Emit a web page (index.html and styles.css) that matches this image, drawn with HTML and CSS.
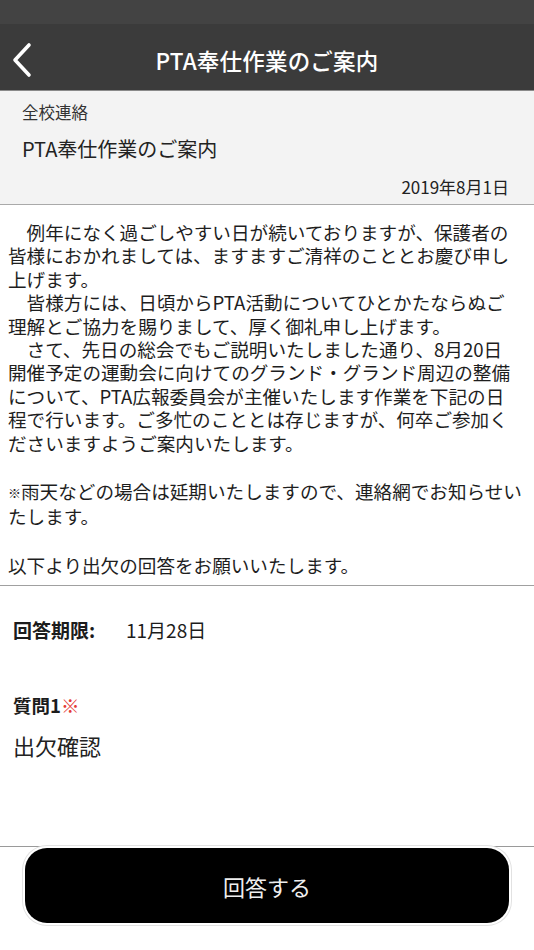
FILE: index.html
```html
<!DOCTYPE html>
<html lang="ja">
<head>
<meta charset="utf-8">
<title>PTA奉仕作業のご案内</title>
<link rel="stylesheet" href="styles.css">
</head>
<body>
<div class="page">
  <div class="status"></div>
  <header class="nav">
    <div class="back">
      <svg width="24" height="36" viewBox="0 0 24 36" aria-hidden="true">
        <polyline points="19,3 5,18 19,33" fill="none" stroke="#ffffff" stroke-width="3.6" stroke-linecap="round" stroke-linejoin="round"/>
      </svg>
    </div>
    <div class="title">PTA奉仕作業のご案内</div>
    <div></div>
  </header>
  <section class="head">
    <div class="cat">全校連絡</div>
    <div class="subject">PTA奉仕作業のご案内</div>
    <div class="date">2019年8月1日</div>
  </section>
  <section class="body">
    <p>　例年になく過ごしやすい日が続いておりますが、保護者の<br>皆様におかれましては、ますますご清祥のこととお慶び申し<br>上げます。<br>　皆様方には、日頃からPTA活動についてひとかたならぬご<br>理解とご協力を賜りまして、厚く御礼申し上げます。<br>　さて、先日の総会でもご説明いたしました通り、8月20日<br>開催予定の運動会に向けてのグランド・グランド周辺の整備<br>について、PTA広報委員会が主催いたします作業を下記の日<br>程で行います。ご多忙のこととは存じますが、何卒ご参加く<br>ださいますようご案内いたします。</p>
    <p><span class="mark">※</span>雨天などの場合は延期いたしますので、連絡網でお知らせい<br>たします。</p>
    <p>以下より出欠の回答をお願いいたします。</p>
  </section>
  <section class="deadline">
    <div class="label">回答期限:</div>
    <div class="value">11月28日</div>
  </section>
  <section class="question">
    <div class="qlabel">質問1<span class="req">※</span></div>
    <div class="qtext">出欠確認</div>
  </section>
  <footer class="footer">
    <button class="answer" type="button">回答する</button>
  </footer>
</div>
</body>
</html>
```

FILE: styles.css
```css
html, body {
  margin: 0;
  padding: 0;
  background: #ffffff;
}

body {
  font-family: "Noto Sans CJK JP", "Noto Sans", "Liberation Sans", sans-serif;
  color: #1c1c1c;
}

.page {
  width: 534px;
}

.status {
  height: 24px;
  background: #434343;
}

.nav {
  height: 60px;
  padding-top: 6px;
  background: #3b3b3b;
  border-bottom: 1px solid #8a8a8a;
  display: grid;
  grid-template-columns: 60px 1fr 60px;
  align-items: center;
}

.back {
  display: flex;
  align-items: center;
  padding-left: 10px;
}

.back svg {
  display: block;
}

.title {
  color: #ffffff;
  font-size: 22.5px;
  font-weight: 500;
  line-height: 30px;
  text-align: center;
  letter-spacing: 0.2px;
}

.head {
  background: #f3f3f3;
  padding: 9px 25px 6px 22px;
  border-bottom: 1px solid #a9a9a9;
}

.cat {
  font-size: 16.5px;
  line-height: 24px;
  color: #333333;
}

.subject {
  font-size: 20px;
  line-height: 26px;
  margin-top: 12px;
  color: #222222;
}

.date {
  font-size: 17px;
  line-height: 22px;
  margin-top: 14px;
  text-align: right;
  color: #222222;
}

.body {
  padding: 15px 0 9px 8px;
  font-size: 18.6px;
  line-height: 23.4px;
  white-space: nowrap;
  border-bottom: 1px solid #a0a0a0;
  color: #1e1e1e;
}

.body p {
  margin: 0;
}

.body p + p {
  margin-top: 25px;
}

.mark {
  font-size: 0.7em;
  vertical-align: 1px;
}

.deadline {
  display: flex;
  padding: 32px 13px 0;
  font-size: 19px;
  line-height: 24px;
}

.deadline .label {
  width: 113px;
  font-weight: 700;
}

.question {
  padding: 51px 13px 0;
}

.qlabel {
  font-size: 18.5px;
  line-height: 24px;
  font-weight: 700;
}

.req {
  color: #e53935;
  font-weight: 400;
}

.qtext {
  font-size: 22px;
  line-height: 30px;
  margin-top: 13px;
  color: #222222;
}

.footer {
  margin-top: 86px;
  border-top: 1px solid #9a9a9a;
  padding: 1px 25px 29px;
}

.answer {
  display: block;
  width: 100%;
  height: 75px;
  border: none;
  border-radius: 22px;
  background: #000000;
  color: #eeeeee;
  font-family: inherit;
  font-size: 22px;
  line-height: 30px;
  box-shadow: 0 0 0 2px #ffffff, 0 0 0 3px #e2e2e2;
  cursor: pointer;
}
```
